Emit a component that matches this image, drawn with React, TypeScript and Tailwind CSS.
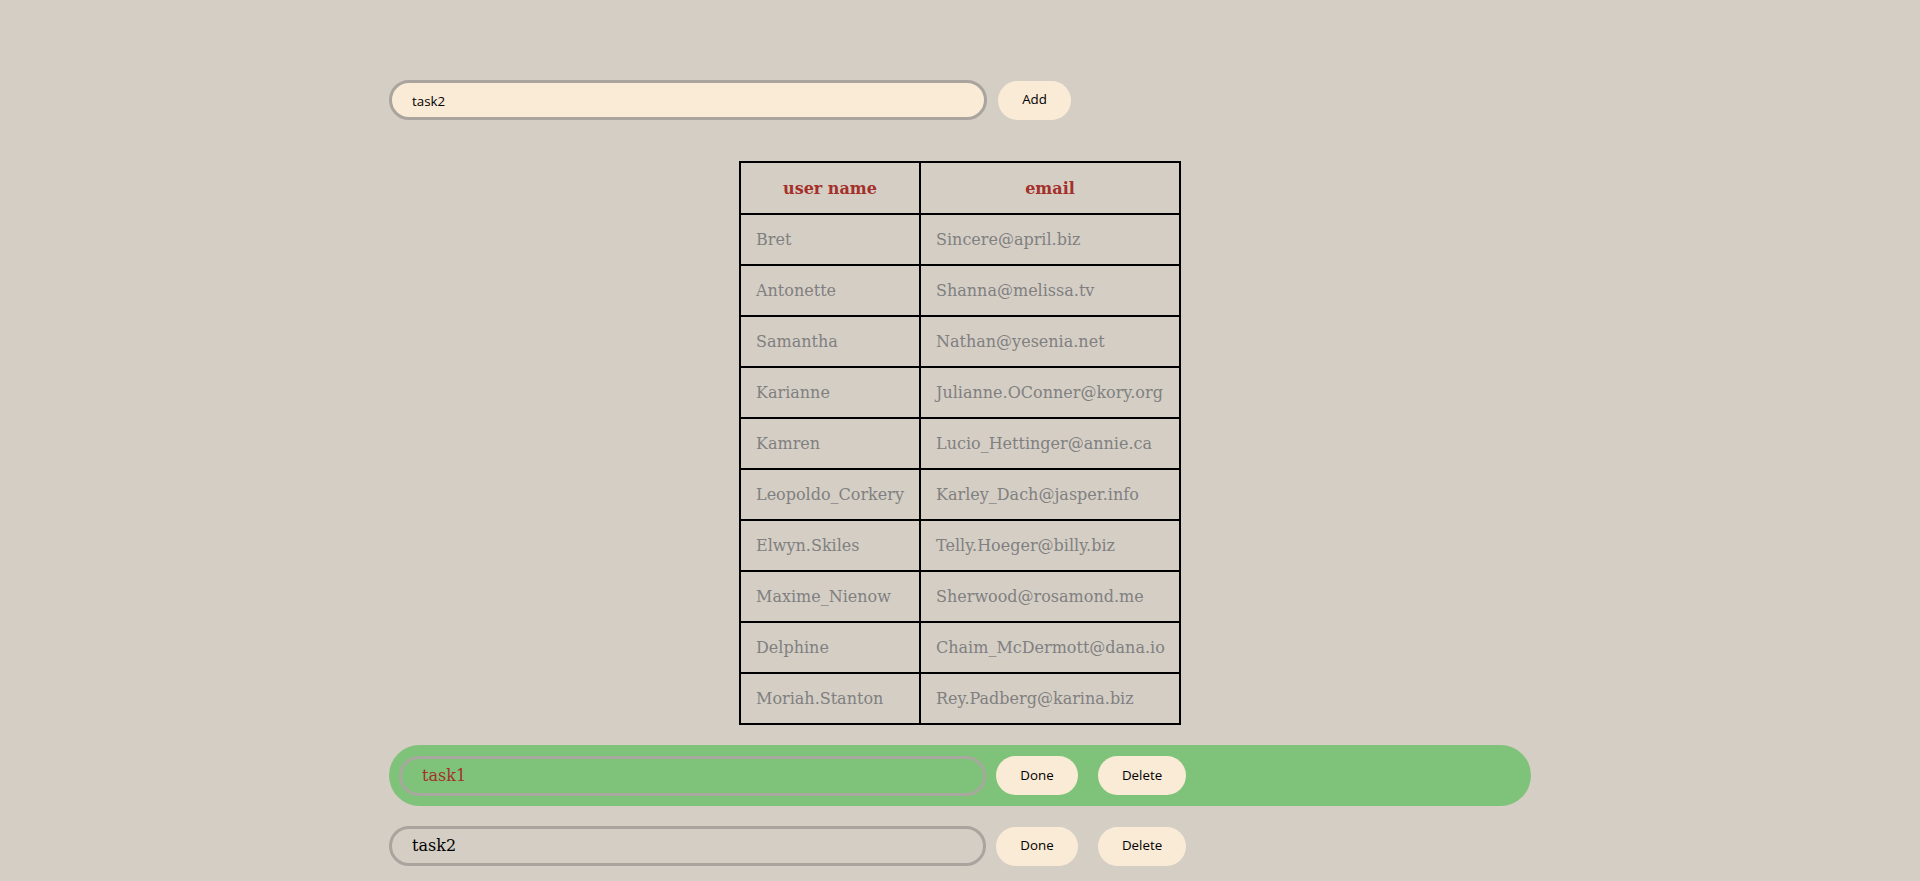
import { useState } from "react";

const users = [
  { username: "Bret", email: "Sincere@april.biz" },
  { username: "Antonette", email: "Shanna@melissa.tv" },
  { username: "Samantha", email: "Nathan@yesenia.net" },
  { username: "Karianne", email: "Julianne.OConner@kory.org" },
  { username: "Kamren", email: "Lucio_Hettinger@annie.ca" },
  { username: "Leopoldo_Corkery", email: "Karley_Dach@jasper.info" },
  { username: "Elwyn.Skiles", email: "Telly.Hoeger@billy.biz" },
  { username: "Maxime_Nienow", email: "Sherwood@rosamond.me" },
  { username: "Delphine", email: "Chaim_McDermott@dana.io" },
  { username: "Moriah.Stanton", email: "Rey.Padberg@karina.biz" },
];

type Task = { id: number; text: string; done: boolean };

const btn =
  "h-[39px] rounded-full bg-[#faebd7] text-[13.33px] text-black font-['Open_Sans',sans-serif] flex items-center justify-center";

export default function App() {
  const [value, setValue] = useState("task2");
  const [tasks, setTasks] = useState<Task[]>([
    { id: 1, text: "task1", done: true },
    { id: 2, text: "task2", done: false },
  ]);

  const add = () => {
    if (!value.trim()) return;
    setTasks((t) => [...t, { id: Date.now(), text: value, done: false }]);
  };

  const toggle = (id: number) => setTasks((a) => a.map((x) => (x.id === id ? { ...x, done: !x.done } : x)));
  const remove = (id: number) => setTasks((a) => a.filter((x) => x.id !== id));

  return (
    <div className="min-h-[881px] bg-[#d5cec5] pt-[80px] pb-4 font-['DejaVu_Serif',serif]">
      <div className="w-[1142px] mx-auto">
        {/* add form */}
        <div className="flex items-center gap-[11px]">
          <input
            value={value}
            onChange={(e) => setValue(e.target.value)}
            className="w-[598px] h-[40px] rounded-full border-[3px] border-[#a9a49e] bg-[#faebd7] pl-[20px] pt-[1px] text-[13.33px] text-black font-['Open_Sans',sans-serif] outline-none"
          />
          <button onClick={add} className={`${btn} w-[73px]`}>
            Add
          </button>
        </div>

        {/* users */}
        <table className="mx-auto mt-[41px] border-collapse table-fixed w-[440px]">
          <colgroup>
            <col className="w-[180px]" />
            <col className="w-[260px]" />
          </colgroup>
          <thead>
            <tr>
              <th className="border-2 border-black px-[15px] pt-[16px] pb-[15px] leading-[19px] text-[16px] font-bold text-[#a3302a] text-center">user name</th>
              <th className="border-2 border-black px-[15px] pt-[16px] pb-[15px] leading-[19px] text-[16px] font-bold text-[#a3302a] text-center">email</th>
            </tr>
          </thead>
          <tbody>
            {users.map((u) => (
              <tr key={u.username}>
                <td className="border-2 border-black p-[15px] leading-[19px] text-[16px] text-[#808080] whitespace-nowrap">{u.username}</td>
                <td className="border-2 border-black p-[15px] leading-[19px] text-[16px] text-[#808080] whitespace-nowrap">{u.email}</td>
              </tr>
            ))}
          </tbody>
        </table>

        {/* tasks */}
        <div className="mt-[20px] flex flex-col gap-[20px]">
          {tasks.map((t) =>
            t.done ? (
              <div key={t.id} className="h-[61px] rounded-full bg-[#7fc27a] pl-[10px] flex items-center">
                <div className="w-[587px] h-[40px] rounded-full border-[3px] border-[#a8a89e] pl-[20px] flex items-center text-[16px] text-[#a3302a]">
                  {t.text}
                </div>
                <button onClick={() => toggle(t.id)} className={`${btn} w-[82px] ml-[10px]`}>
                  Done
                </button>
                <button onClick={() => remove(t.id)} className={`${btn} w-[88px] ml-[20px]`}>
                  Delete
                </button>
              </div>
            ) : (
              <div key={t.id} className="h-[40px] flex items-center">
                <div className="w-[597px] h-[40px] rounded-full border-[3px] border-[#a9a49e] pl-[20px] flex items-center text-[16px] text-black">
                  {t.text}
                </div>
                <button onClick={() => toggle(t.id)} className={`${btn} w-[82px] ml-[10px]`}>
                  Done
                </button>
                <button onClick={() => remove(t.id)} className={`${btn} w-[88px] ml-[20px]`}>
                  Delete
                </button>
              </div>
            )
          )}
        </div>
      </div>
    </div>
  );
}
